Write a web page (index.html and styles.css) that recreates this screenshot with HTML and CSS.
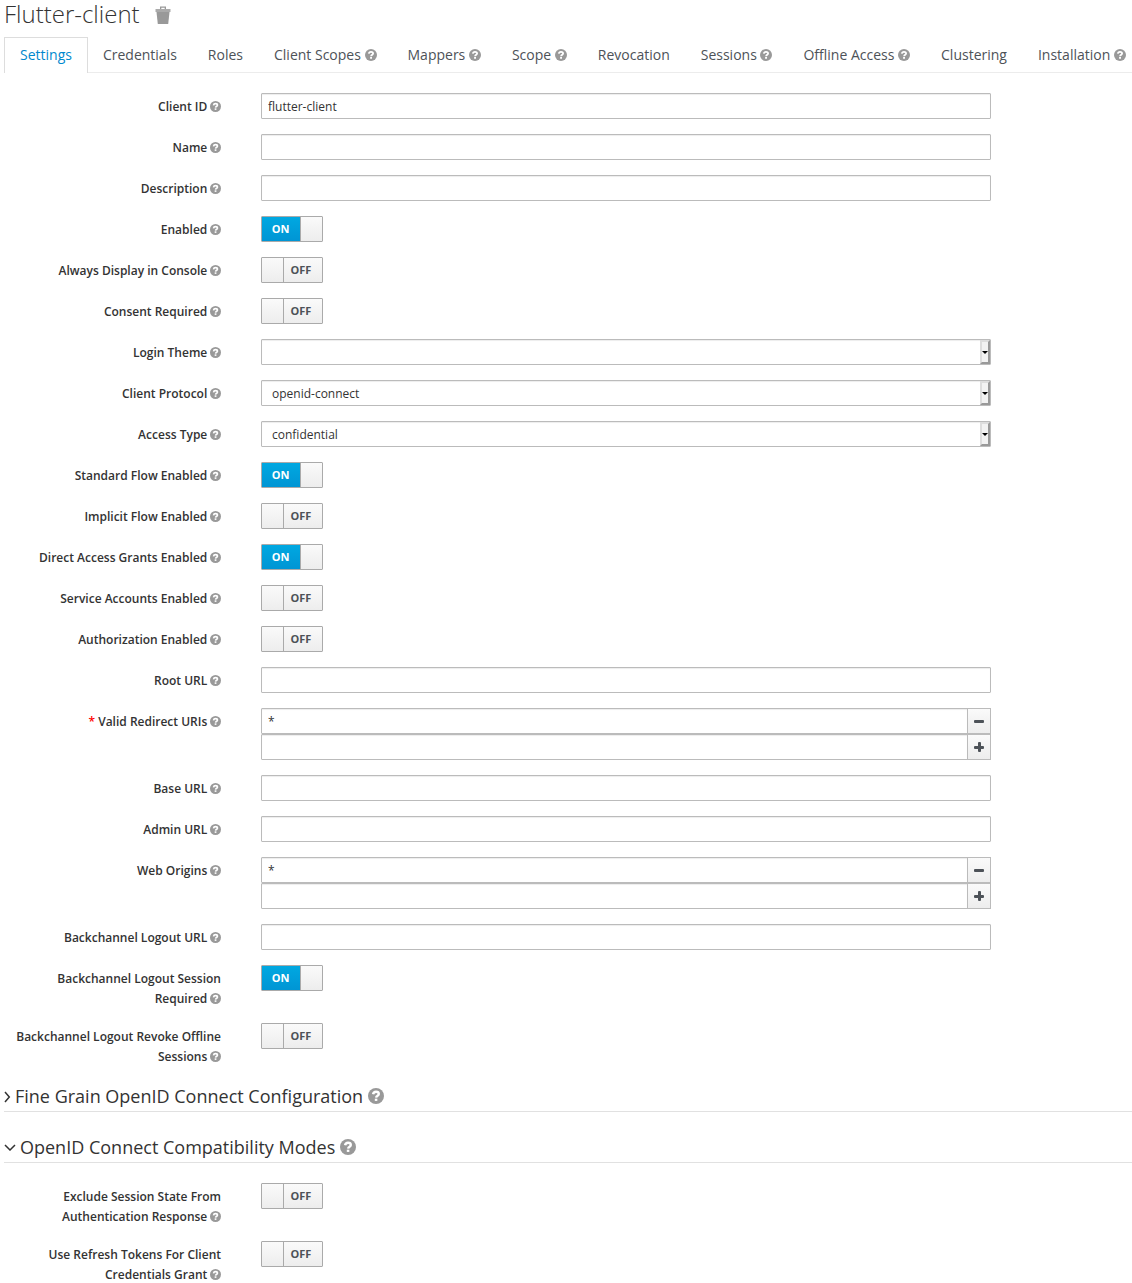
FILE: index.html
```html
<!DOCTYPE html>
<html lang="en">
<head>
<meta charset="utf-8">
<title>Flutter-client</title>
<link rel="stylesheet" href="styles.css">
</head>
<body>
<svg class="sprite" aria-hidden="true">
  <symbol id="help" viewBox="0 0 12 12">
    <circle cx="6" cy="6" r="6" fill="#999"/>
    <path d="M3.800 4.700C4 3.500 4.800 2.800 6 2.800S8.100 3.500 8.100 4.500C8.100 5.800 6.200 5.700 6.100 7.200" fill="none" stroke="#fff" stroke-width="1.800"/>
    <path d="M5.100 8h1.900v1.700H5.100z" fill="#fff"/>
  </symbol>
</svg>
<h1 class="title">Flutter-client
  <svg class="trash" viewBox="0 0 16 18"><path d="M5 3V.5h6V3H9.700V1.700H6.300V3z" fill="#999"/><path d="M.5 3h15v3H.5z" fill="#aaa"/><path d="M1.500 6h13l-1.300 12H2.800z" fill="#999"/></svg>
</h1>
<ul class="tabs">
  <li class="tab active">Settings</li>
  <li class="tab">Credentials</li>
  <li class="tab">Roles</li>
  <li class="tab">Client Scopes <svg class="help"><use href="#help"/></svg></li>
  <li class="tab">Mappers <svg class="help"><use href="#help"/></svg></li>
  <li class="tab">Scope <svg class="help"><use href="#help"/></svg></li>
  <li class="tab">Revocation</li>
  <li class="tab">Sessions <svg class="help"><use href="#help"/></svg></li>
  <li class="tab">Offline Access <svg class="help"><use href="#help"/></svg></li>
  <li class="tab">Clustering</li>
  <li class="tab">Installation <svg class="help"><use href="#help"/></svg></li>
</ul>
<form class="form">
  <div class="row"><label class="label">Client ID <svg class="help"><use href="#help"/></svg></label><input class="input" value="flutter-client"></div>
  <div class="row"><label class="label">Name <svg class="help"><use href="#help"/></svg></label><input class="input"></div>
  <div class="row"><label class="label">Description <svg class="help"><use href="#help"/></svg></label><input class="input"></div>
  <div class="row"><label class="label">Enabled <svg class="help"><use href="#help"/></svg></label><div class="switch on"><span class="state">ON</span><span class="knob"></span></div></div>
  <div class="row"><label class="label">Always Display in Console <svg class="help"><use href="#help"/></svg></label><div class="switch"><span class="knob"></span><span class="state">OFF</span></div></div>
  <div class="row"><label class="label">Consent Required <svg class="help"><use href="#help"/></svg></label><div class="switch"><span class="knob"></span><span class="state">OFF</span></div></div>
  <div class="row"><label class="label">Login Theme <svg class="help"><use href="#help"/></svg></label><div class="select"><span class="value"></span><span class="drop"></span></div></div>
  <div class="row"><label class="label">Client Protocol <svg class="help"><use href="#help"/></svg></label><div class="select"><span class="value">openid-connect</span><span class="drop"></span></div></div>
  <div class="row"><label class="label">Access Type <svg class="help"><use href="#help"/></svg></label><div class="select"><span class="value">confidential</span><span class="drop"></span></div></div>
  <div class="row"><label class="label">Standard Flow Enabled <svg class="help"><use href="#help"/></svg></label><div class="switch on"><span class="state">ON</span><span class="knob"></span></div></div>
  <div class="row"><label class="label">Implicit Flow Enabled <svg class="help"><use href="#help"/></svg></label><div class="switch"><span class="knob"></span><span class="state">OFF</span></div></div>
  <div class="row"><label class="label">Direct Access Grants Enabled <svg class="help"><use href="#help"/></svg></label><div class="switch on"><span class="state">ON</span><span class="knob"></span></div></div>
  <div class="row"><label class="label">Service Accounts Enabled <svg class="help"><use href="#help"/></svg></label><div class="switch"><span class="knob"></span><span class="state">OFF</span></div></div>
  <div class="row"><label class="label">Authorization Enabled <svg class="help"><use href="#help"/></svg></label><div class="switch"><span class="knob"></span><span class="state">OFF</span></div></div>
  <div class="row"><label class="label">Root URL <svg class="help"><use href="#help"/></svg></label><input class="input"></div>
  <div class="row"><label class="label"><span class="required">*</span> Valid Redirect URIs <svg class="help"><use href="#help"/></svg></label>
    <div class="list">
      <div class="entry"><input class="input" value="*"><span class="btn minus"></span></div>
      <div class="entry"><input class="input"><span class="btn minus plus"></span></div>
    </div></div>
  <div class="row"><label class="label">Base URL <svg class="help"><use href="#help"/></svg></label><input class="input"></div>
  <div class="row"><label class="label">Admin URL <svg class="help"><use href="#help"/></svg></label><input class="input"></div>
  <div class="row"><label class="label">Web Origins <svg class="help"><use href="#help"/></svg></label>
    <div class="list">
      <div class="entry"><input class="input" value="*"><span class="btn minus"></span></div>
      <div class="entry"><input class="input"><span class="btn minus plus"></span></div>
    </div></div>
  <div class="row"><label class="label">Backchannel Logout URL <svg class="help"><use href="#help"/></svg></label><input class="input"></div>
  <div class="row"><label class="label">Backchannel Logout Session<br>Required <svg class="help"><use href="#help"/></svg></label><div class="switch on"><span class="state">ON</span><span class="knob"></span></div></div>
  <div class="row"><label class="label">Backchannel Logout Revoke Offline<br>Sessions <svg class="help"><use href="#help"/></svg></label><div class="switch"><span class="knob"></span><span class="state">OFF</span></div></div>
</form>
<h2 class="section"><svg class="chevron right" viewBox="0 0 7 12"><path d="M1 1l4.300 5L1 11" /></svg>Fine Grain OpenID Connect Configuration <svg class="help"><use href="#help"/></svg></h2>
<h2 class="section"><svg class="chevron down" viewBox="0 0 12 7"><path d="M1 1l5 5L11 1"/></svg>OpenID Connect Compatibility Modes <svg class="help"><use href="#help"/></svg></h2>
<form class="form">
  <div class="row"><label class="label">Exclude Session State From<br>Authentication Response <svg class="help"><use href="#help"/></svg></label><div class="switch"><span class="knob"></span><span class="state">OFF</span></div></div>
  <div class="row"><label class="label">Use Refresh Tokens For Client<br>Credentials Grant <svg class="help"><use href="#help"/></svg></label><div class="switch"><span class="knob"></span><span class="state">OFF</span></div></div>
</form>
</body>
</html>
```
FILE: styles.css
```css
* { box-sizing: border-box; }
html { overflow: hidden; }
body {
  margin: 0;
  padding-left: 4px;
  height: 1283px;
  overflow: hidden;
  background: #fff;
  color: #333;
  font: 12px/20px "Open Sans", sans-serif;
}
.sprite { display: none; }
.title {
  display: flex;
  align-items: center;
  gap: 15px;
  margin: 0;
  height: 37px;
  padding-bottom: 10px;
  font-size: 24px;
  font-weight: 300;
  line-height: 29px;
}
.trash { width: 16px; height: 18px; margin-top: 3px; }
.help { width: 11px; height: 11px; margin-left: -.4px; vertical-align: -1px; }

.tabs {
  display: flex;
  margin: 0;
  padding: 0;
  height: 36px;
  list-style: none;
  border-bottom: 1px solid #ececec;
  font-size: 14px;
  white-space: nowrap;
}
.tab {
  height: 36px;
  padding: 7px 15px 8px;
  margin-right: -1px;
  border: 1px solid transparent;
  border-bottom: 0;
  color: #4d5258;
}
.tab.active { background: #fff; border-color: #ddd; color: #0088ce; }
.tab .help { width: 12px; height: 12px; margin-left: 0; }

.form { display: flex; flex-direction: column; gap: 15px; padding-top: 20px; }
.row { display: flex; align-items: flex-start; gap: 40px; }
.label {
  width: 217px;
  height: 26px;
  padding-top: 4px;
  text-align: right;
  font-weight: 600;
  white-space: nowrap;
}
.label:has(br) { height: 43px; }
.required { color: #f00; }
.input, .select {
  width: 730px;
  height: 26px;
  border: 1px solid #bbb;
  border-radius: 1px;
  background: #fff;
  box-shadow: inset 0 1px 1px rgba(3, 3, 3, .075);
  color: #333;
  font: inherit;
}
.input { padding: 2px 6px; }
.select { display: flex; padding-left: 10px; }
.value { flex: 1; line-height: 25px; }
.drop {
  display: grid;
  place-items: center;
  width: 10px;
  height: 24px;
  background: #f2f2f2;
  border: 2px solid;
  border-color: #ddd #999 #999 #ddd;
}
.drop::before {
  content: "";
  margin-left: -1px;
  border: 3px solid transparent;
  border-top-color: #000;
  border-bottom: 0;
}
.list { width: 730px; }
.entry { display: flex; }
.entry .input { flex: 1; width: auto; border-radius: 1px 0 0 1px; }
.btn {
  display: grid;
  place-items: center;
  width: 24px;
  height: 26px;
  margin-left: -1px;
  border: 1px solid #bbb;
  background: linear-gradient(#fafafa, #ededed);
}
.minus::before, .plus::after {
  content: "";
  grid-area: 1 / 1;
  width: 10px;
  height: 3px;
  border-radius: 1px;
  background: #4d5258;
}
.plus::after { width: 3px; height: 10px; }

.switch {
  display: flex;
  width: 62px;
  height: 26px;
  border: 1px solid #aaa;
  border-radius: 1px;
  background: linear-gradient(#fafafa, #ededed);
  color: #4d5258;
  font-size: 11px;
  font-weight: 700;
  line-height: 24px;
}
.state { flex: 1; padding-right: 4px; text-align: center; }
.knob { width: 22px; border-right: 1px solid #aaa; }
.on .state { padding: 0 1px 0 0; background: linear-gradient(#00a8e1, #0095d4); color: #fff; }
.on .knob { border: 0; border-left: 1px solid #aaa; }

.section {
  display: flex;
  align-items: center;
  height: 31px;
  margin: 0;
  padding-bottom: 1px;
  border-bottom: 1px solid #e1e1e1;
  font-size: 18px;
  font-weight: 400;
}
.form + .section { margin-top: 15px; }
.section + .section { margin-top: 20px; }
.section .help { width: 16px; height: 16px; margin-left: 5px; }
.chevron { fill: none; stroke: #333; stroke-width: 1.5; }
.right { width: 7px; height: 12px; margin: 2px 4px 0 0; }
.down { width: 12px; height: 7px; margin: 2px 4px 0 0; }
```
